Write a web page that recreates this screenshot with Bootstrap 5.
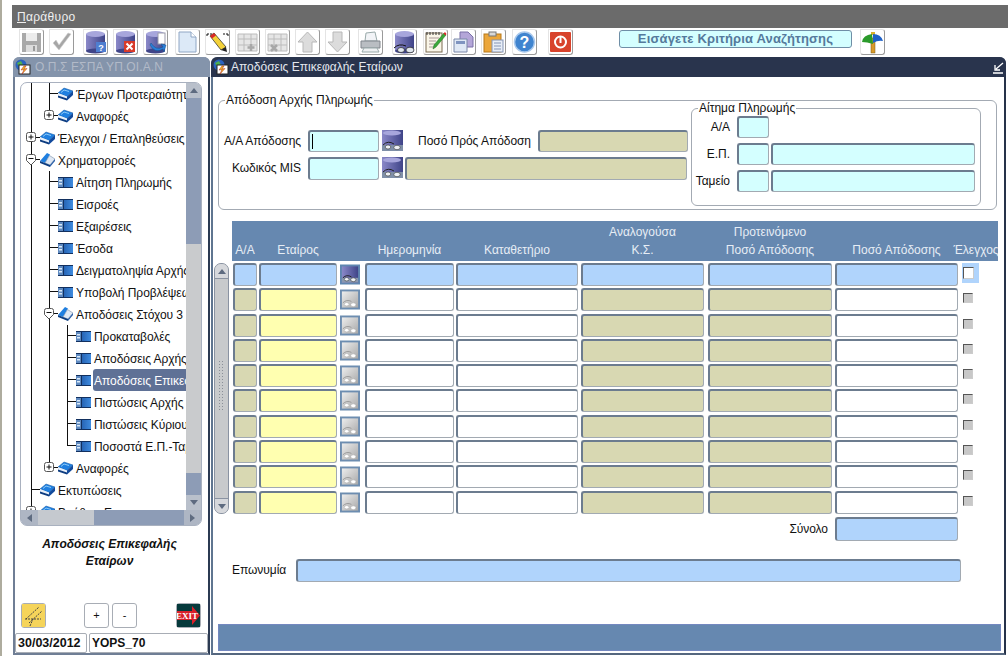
<!DOCTYPE html>
<html lang="el">
<head>
  <meta charset="UTF-8" />
  <meta name="viewport" content="width=device-width, initial-scale=1.0"/>
  <title>Αποδόσεις Επικεφαλής Εταίρων</title>
  <link rel="stylesheet" href="https://cdn.jsdelivr.net/npm/bootstrap@5.3.0/dist/css/bootstrap.min.css" />
  <style>
    html, body { height: 100%; }
    body {
      background: #fff;
      color: #111;
      font-family: "Liberation Sans", Arial, sans-serif;
      font-size: 12px;
      line-height: 1.2;
      overflow: hidden;
    }
    .app-root { width: 1008px; height: 656px; border-left: 2px solid #aeac9e; overflow: hidden; }
    .svg-defs { position: absolute; width: 0; height: 0; }

    /* menu + toolbar */
    .menu-bar { height: 23px; margin: 5px 0 0 10px; background: #6b6b6b; color: #f0f0f0; line-height: 24px; padding-left: 5px; letter-spacing: .3px; }
    .tool-bar { height: 29px; padding: 1px 0 0 17px; }
    .tb-btn { width: 25px; height: 26px; margin-right: 5px; border: 1px solid #e4e4e4; border-right-color: #9a9a9a; border-bottom-color: #9a9a9a; border-radius: 0 3px 3px 3px; flex: none; }
    .tb-btn svg { display: block; width: 23px; height: 24px; }
    .sp1 { margin-left: 1px; } .sp2 { margin-left: 2px; } .sp3 { margin-left: 3px; } .sp4 { margin-left: 4px; } .sp6 { margin-left: 6px; } .spn { margin-left: -2px; }
    .hint-box { width: 233px; height: 18px; margin: 1px 8px 0 41px; background: #d4ffff; border: 1px solid #6f8ea6; border-radius: 3px; color: #557a9c; font-weight: bold; font-size: 13px; letter-spacing: .16px; text-align: center; line-height: 16px; flex: none; }

    /* windows */
    .desk { height: 598px; padding-left: 11px; }
    .win-left { width: 197px; height: 598px; margin-right: 1px; border: solid #6f7e95; border-width: 0 2px 2px 2px; border-right-color: #2b3a52; border-radius: 7px 7px 0 0; }
    .win-right { width: 795px; height: 598px; border: solid #5f7590; border-width: 0 2px 2px 2px; border-right-color: #26324a; border-bottom-color: #55677f; border-radius: 7px 7px 0 0; }
    .win-title { height: 20px; margin: 0 -2px; padding: 0 2px; border-radius: 6px 6px 0 0; line-height: 21px; }
    .win-title svg { width: 16px; height: 16px; flex: none; }
    .tt-off { background: #8494ab; color: #b2bac8; letter-spacing: .1px; }
    .tt-on { background: #29344d; color: #e4e8ef; }
    .tt-text { margin-left: 2px; }

    /* navigator tree */
    .tree-box { width: 182px; height: 444px; margin: 5px 0 0 5px; border: 1px solid #a9b1bf; border-radius: 7px; overflow: hidden; position: relative; }
    .tree-top { height: 427px; }
    .tree-view { width: 165px; overflow: hidden; padding-left: 10px; white-space: nowrap; }
    .t-row { height: 22px; line-height: 24px; }
    .gd { width: 18px; height: 22px; flex: none; border-left: 1px solid #111; }
    .cn { width: 9px; height: 22px; flex: none; position: relative; }
    .cn::before { content: ""; position: absolute; left: 0; top: 0; width: 1px; height: 100%; background: #111; }
    .cn::after { content: ""; position: absolute; left: 0; top: 10px; width: 100%; height: 1px; background: #111; }
    .cn-l::before { height: 11px; }
    .cn-box { position: absolute; left: -5px; top: 5px; width: 11px; height: 12px; z-index: 1; }
    .t-ico { width: 15px; height: 15px; flex: none; align-self: center; }
    .t-txt { margin-left: 3px; letter-spacing: -.05px; }
    .t-sel { margin-left: 2px; padding-left: 1px; width: 100px; background: #5f7196; color: #fff; border-radius: 3px 0 0 3px; letter-spacing: -.05px; }
    .vs-bar { width: 15px; background: #8d9cb6; border-radius: 0 6px 0 0; flex: none; }
    .vs-btn { height: 15px; background: #b9c0cb; }
    .vs-thumb { height: 229px; margin-top: 146px; background: #c9cbcd; }
    .vs-low { height: 22px; }
    .hs-bar { height: 15px; background: #8d9cb6; }
    .hs-btn { width: 17px; background: #aeb6c4; flex: none; }
    .hs-thumb { width: 56px; background: #c5c9cf; }
    .arr { width: 0; height: 0; border: 4px solid transparent; }
    .arr-u { border-bottom: 5px solid #5e6b80; border-top-width: 0; }
    .arr-d { border-top: 5px solid #5e6b80; border-bottom-width: 0; }
    .arr-l { border-right: 5px solid #5e6b80; border-left-width: 0; }
    .arr-r { border-left: 5px solid #5e6b80; border-right-width: 0; }

    .nav-caption { height: 77px; padding: 10px 4px 0 0; font-weight: bold; font-style: italic; text-align: center; line-height: 17px; }
    .nav-btns { height: 25px; padding: 0 7px 0 6px; }
    .sq-btn { width: 25px; height: 25px; border: 1px solid #a8adb5; border-radius: 3px; flex: none; font-size: 11px; text-align: center; line-height: 23px; }
    .sq-btn svg { display: block; width: 23px; height: 23px; }
    .sq-plus { margin-left: 38px; }
    .sq-minus { margin-left: 3px; }
    .st-row { height: 20px; margin-top: 5px; gap: 2px; }
    .st-cell { height: 20px; border: 1px solid #a8adb5; border-radius: 2px; font-weight: bold; font-size: 12.5px; line-height: 19px; padding-left: 2px; }
    .st-date { width: 72px; }
    .st-user { width: 119px; font-size: 12px; }

    /* form */
    .grp-main { position: relative; width: 779px; height: 110px; margin: 23px 0 0 5px; border: 1px solid #a3aab3; border-radius: 6px; }
    .grp-left { margin-top: 29px; }
    .grp-sub { position: relative; width: 290px; height: 98px; margin: 7px 15px 0 0; border: 1px solid #a3aab3; border-radius: 6px; flex: none; padding-top: 7px; }
    .grp-ttl { position: absolute; left: 6px; top: -7px; background: #fff; padding: 0 1px; line-height: 13px; white-space: nowrap; }
    .f-row { margin-bottom: 5px; height: 23px; line-height: 23px; }
    .fr22 { height: 22px; line-height: 22px; }
    .lbl { text-align: right; flex: none; padding-right: 7px; white-space: nowrap; letter-spacing: -.05px; }
    .lb89 { width: 89px; }
    .lb135 { width: 135px; }
    .lb45 { width: 45px; }
    .fld { height: 100%; flex: none; border: 2px solid #6c7c8f; border-right-color: #a2aab2; border-bottom-color: #a2aab2; border-right-width: 1px; border-bottom-width: 1px; border-radius: 3px; }
    .w32 { width: 32px; }
    .w71 { width: 71px; }
    .w123 { width: 123px; }
    .w150 { width: 150px; }
    .w204 { width: 204px; margin-left: 2px; }
    .w282 { width: 282px; margin-left: 2px; }
    .w665 { width: 665px; }
    .bg-cy { background: #d4ffff; }
    .bg-kh { background: #d8d8b2; }
    .bg-ye { background: #ffffb0; }
    .bg-bl { background: #b0d4fc; }
    .bg-wh { background: #fff; }
    .caret-mk { display: block; width: 1px; height: 15px; margin: 2px 0 0 2px; background: #000; }
    .lov-btn { width: 21px; height: 21px; margin-left: 3px; flex: none; }
    .lov-btn svg { display: block; width: 21px; height: 21px; }

    /* multi-record block */
    .grid-wrap { margin: 11px 0 0 1px; }
    .grid-head { width: 766px; height: 40px; margin-left: 18px; background: #6688b0; color: #e6edf5; overflow: hidden; }
    .grid-head > div { flex: none; padding-bottom: 2px; line-height: 18px; text-align: center; align-self: flex-end; white-space: nowrap; }
    .grid-body { margin-top: 2px; }
    .grid-scroll { width: 15px; height: 251px; margin-right: 3px; border: 1px solid #8a93a2; border-radius: 7px; background: #c8cacc; flex: none; }
    .gs-end { height: 15px; background: #d6d8dc; border-radius: 6px 6px 0 0; border-bottom: 1px solid #8a93a2; }
    .gs-end.down { border-radius: 0 0 6px 6px; border-bottom: 0; border-top: 1px solid #8a93a2; }
    .gs-mid { width: 5px; height: 52px; margin: 81px 0 86px 3px; background-image: radial-gradient(#8a8f98 40%, transparent 45%); background-size: 3px 3px; }
    .rec-list { gap: 2.3px; }
    .rec { height: 23px; }
    .c1 { width: 24px; margin-left: 1px; }
    .c2 { width: 78px; margin-left: 2px; }
    .c3 { width: 20px; margin-left: 3px; }
    .c4 { width: 89px; margin-left: 5px; }
    .c5 { width: 122px; margin-left: 2px; }
    .c6 { width: 123px; margin-left: 3px; }
    .c7 { width: 124px; margin-left: 4px; }
    .c8 { width: 123px; margin-left: 3px; }
    .c9 { width: 17px; margin-left: 4px; flex: none; }
    .grid-head .c9 { margin-left: -5px; width: 46px; }
    .rec-ico { height: 21px; margin-top: 1px; display: block; flex: none; }
    .rec-ico svg { display: block; width: 20px; height: 21px; }
    .chk-cell { height: 20px; padding: 5px 0 0 1px; }
    .chk-box { display: block; width: 10px; height: 10px; border: 1px solid #555; border-right-color: #ccc; border-bottom-color: #ccc; }
    .chk-on { background: #b0d4fc; }
    .chk-on .chk-box { background: #fff; width: 11px; height: 12px; margin-top: -1px; }
    .chk-off .chk-box { background: #c8c8c8; }
    .sum-row { width: 745px; height: 24px; margin-top: 3px; line-height: 24px; }
    .name-row { height: 23px; margin: 18px 0 0 19px; line-height: 23px; }
    .name-lbl { width: 64px; letter-spacing: -.05px; }
    .foot-bar { width: 783px; height: 27px; margin: 42px 0 0 5px; background: #6688b0; border: 1px solid #7488c0; }
  </style>
</head>
<body>
  <svg class="svg-defs">
    <defs>
      <linearGradient id="dbg" x1="0" x2="1" y1="0" y2="0"><stop offset="0" stop-color="#8a88c8"/><stop offset="1" stop-color="#3f4488"/></linearGradient>
      <linearGradient id="dbk" x1="0" x2="1" y1="0" y2="1"><stop offset="0" stop-color="#ededed"/><stop offset="1" stop-color="#a8a8a8"/></linearGradient>
      <linearGradient id="frm" x1="0" x2="1" y1="0" y2="0"><stop offset="0" stop-color="#174a98"/><stop offset="1" stop-color="#3f8ce0"/></linearGradient>

      <symbol id="i-db" viewBox="0 0 23 24">
        <rect x="2" y="4" width="19" height="17" fill="url(#dbg)"/><ellipse cx="11.5" cy="21" rx="9.500" ry="2.500" fill="#3f4488"/><ellipse cx="11.5" cy="4" rx="9.500" ry="3" fill="#a7a6dc"/>
      </symbol>
      <symbol id="i-win" viewBox="0 0 16 16">
        <circle cx="6" cy="6" r="5.500" fill="#2a62c0"/><path d="M2 4 L6 2 L8 6 L4 8Z" fill="#4fb050"/>
        <rect x="4" y="6" width="11" height="9" fill="#fff" stroke="#222"/>
        <path d="M9 7 L6 11 L9 10.500 L7 15 L12 9.500 L9 10 L11 7Z" fill="#f2c21a" stroke="#b02020" stroke-width=".5"/>
      </symbol>
      <symbol id="i-book" viewBox="0 0 15 15">
        <path d="M0 6 L6 1 L15 4 L9 9.500Z" fill="#1f7fe0" stroke="#12569e" stroke-width=".5"/>
        <path d="M0 6 L9 9.500 L9 11.500 L0 8.500Z" fill="#e8f0fa"/><path d="M0 8.500 L9 11.500 L9 13.500 L0 10.500Z" fill="#0d3c80"/>
        <path d="M9 9.500 L15 4 L15 8 L9 13.500Z" fill="#124a9c"/><path d="M3 5.500 L6 3 L11 4.500" stroke="#8ccaf8" fill="none"/>
      </symbol>
      <symbol id="i-bookopen" viewBox="0 0 15 15">
        <path d="M0 8 L7 0 L10 1.500 L5 10Z" fill="#1f7fe0"/><path d="M5 10 L9.500 2.500 L15 6 L10 12Z" fill="#dfe8f4" stroke="#7a8ea8" stroke-width=".6"/><path d="M0 8 L10 12 L10 14 L0 10Z" fill="#0d3c80"/><path d="M10 12 L15 6 L15 8 L10 14Z" fill="#2a5fa8"/>
      </symbol>
      <symbol id="i-form" viewBox="0 0 15 15">
        <rect x="0" y="2" width="15" height="11" fill="url(#frm)"/><rect x="0" y="2" width="15" height="1" fill="#12305f"/><rect x="0" y="12" width="15" height="1" fill="#12305f"/>
        <rect x="0" y="3" width="5" height="9" fill="#5f8ac0"/><path d="M1 5h3v1.500H1zM1 8h3v1.500H1z" fill="#d8e8f8"/><rect x="5" y="3" width="1" height="9" fill="#12305f"/>
      </symbol>
      <symbol id="i-plus" viewBox="0 0 11 12">
        <rect x=".5" y=".5" width="9" height="9" rx="2" fill="#fff" stroke="#555"/><path d="M2.500 5h5M5 2.500v5" stroke="#111"/>
      </symbol>
      <symbol id="i-minus" viewBox="0 0 11 12">
        <path d="M.5 2.500 Q.5.5 2.500.5 H7.500 Q9.500.5 9.500 2.500 V6.500 L5 11 L.5 6.500Z" fill="#fff" stroke="#555"/><path d="M2.500 4.500h5" stroke="#111"/>
      </symbol>
      <symbol id="i-lov" viewBox="0 0 21 21">
        <rect width="21" height="21" fill="url(#dbg)"/><ellipse cx="10" cy="3" rx="9" ry="2.500" fill="#a7a6dc"/>
        <rect y="15" width="21" height="6" fill="#7f8fa8"/>
        <path d="M1 15 Q6 10 12 14" stroke="#222" fill="none"/><ellipse cx="6" cy="17" rx="2.800" ry="2" fill="#eef2f6" stroke="#333" stroke-width=".6"/><ellipse cx="15" cy="17.500" rx="3.200" ry="2.200" fill="#eef2f6" stroke="#333" stroke-width=".6"/>
      </symbol>
      <symbol id="i-lovon" viewBox="0 0 21 21">
        <rect width="21" height="21" fill="#5f86b0"/><rect x="2" y="2" width="17" height="17" fill="url(#dbg)"/><rect x="2" y="14" width="17" height="5" fill="#8a98b0"/>
        <path d="M3 14 Q7 10 12 13" stroke="#222" fill="none"/><ellipse cx="7" cy="15.500" rx="2.500" ry="1.800" fill="#eef2f6" stroke="#333" stroke-width=".6"/><ellipse cx="14" cy="16" rx="2.800" ry="2" fill="#eef2f6" stroke="#333" stroke-width=".6"/>
      </symbol>
      <symbol id="i-lovoff" viewBox="0 0 21 21">
        <rect width="21" height="21" fill="#6d8db0"/><rect x="2" y="2" width="17" height="17" fill="url(#dbk)"/>
        <path d="M3 14 Q7 10 12 12.500" stroke="#999" fill="none"/><ellipse cx="7" cy="15.500" rx="2.500" ry="1.800" fill="#fff" stroke="#aaa" stroke-width=".6"/><ellipse cx="14" cy="16" rx="2.800" ry="2" fill="#fff" stroke="#aaa" stroke-width=".6"/>
      </symbol>
    </defs>
  </svg>

  <div class="app-root">
    <div class="menu-bar"><u>Π</u>αράθυρο</div>

    <div class="tool-bar d-flex align-items-start">
      <div class="tb-btn"><svg viewBox="0 0 23 24"><path d="M2 3h19v19H2z" fill="#a9a9a9"/><rect x="6" y="3" width="11" height="8" fill="#ececec"/><rect x="6" y="15" width="11" height="7" fill="#dcdcdc"/><rect x="13" y="16" width="2" height="5" fill="#999"/></svg></div>
      <div class="tb-btn"><svg viewBox="0 0 23 24"><path d="M3 13 L9 20 L21 4 L18 3 L9 15 L6 10Z" fill="#a6a6a6" stroke="#cfcfcf" stroke-width=".6"/></svg></div>
      <div class="tb-btn sp4"><svg viewBox="0 0 23 24"><use href="#i-db"/><rect x="12" y="12" width="10" height="10" fill="#4f7ed0"/><text x="17" y="20.500" text-anchor="middle" font-size="9" font-weight="bold" fill="#fff">?</text></svg></div>
      <div class="tb-btn"><svg viewBox="0 0 23 24"><use href="#i-db"/><rect x="10" y="11" width="11" height="11" fill="#d83a2a"/><path d="M12.500 13.500l6 6M18.500 13.500l-6 6" stroke="#fff" stroke-width="2"/></svg></div>
      <div class="tb-btn"><svg viewBox="0 0 23 24"><use href="#i-db"/><rect x="14" y="3" width="7" height="11" fill="#fff" stroke="#99a"/><path d="M7 13 Q12 21 19 17 L17 14 L22 15 L20 22 L19 19 Q11 24 6 15Z" fill="#2a7fd8" stroke="#14508c" stroke-width=".5"/></svg></div>
      <div class="tb-btn sp2"><svg viewBox="0 0 23 24"><path d="M3 2h12l5 5v15H3z" fill="#dce9f7" stroke="#8fa6c4"/><path d="M15 2v5h5" fill="#fff" stroke="#8fa6c4"/></svg></div>
      <div class="tb-btn"><svg viewBox="0 0 23 24"><path d="M1 4h6M1 4v3M22 4h-6M22 4v3" stroke="#111" stroke-dasharray="2 1"/><path d="M4 6 L8 3 L20 17 L15 20Z" fill="#f4d23a" stroke="#222" stroke-width=".7"/><path d="M4 6 L8 3 L10 5.500 L6 8.500Z" fill="#d8282a"/><path d="M15 20 L20 17 L21 22Z" fill="#222"/></svg></div>
      <div class="tb-btn"><svg viewBox="0 0 23 24"><path d="M2 4h19v17H2zM2 9h19M2 15h19M8 4v17M15 4v17" fill="#e6e6e6" stroke="#bcbcbc"/><path d="M15 14v7M11.500 17.500h7" stroke="#a8a8a8" stroke-width="2.500"/></svg></div>
      <div class="tb-btn"><svg viewBox="0 0 23 24"><path d="M2 4h19v17H2zM2 9h19M2 15h19M8 4v17M15 4v17" fill="#e6e6e6" stroke="#bcbcbc"/><path d="M5 15l6 6M11 15l-6 6" stroke="#a8a8a8" stroke-width="2.500"/></svg></div>
      <div class="tb-btn"><svg viewBox="0 0 23 24"><path d="M11.500 2 L21 12 H16 V22 H7 V12 H2Z" fill="#dcdcdc" stroke="#b8b8b8"/></svg></div>
      <div class="tb-btn"><svg viewBox="0 0 23 24"><path d="M11.500 22 L21 12 H16 V2 H7 V12 H2Z" fill="#dcdcdc" stroke="#b8b8b8"/></svg></div>
      <div class="tb-btn sp3"><svg viewBox="0 0 23 24"><path d="M7 3 L16 2 L18 11 H6Z" fill="#f2f4f7" stroke="#9aa"/><path d="M2 11h19v7H2z" fill="#b9bdc2" stroke="#80858c"/><path d="M5 18 L18 18 L20 22 H3Z" fill="#eef0f2" stroke="#9aa"/></svg></div>
      <div class="tb-btn sp4"><svg viewBox="0 0 23 24"><use href="#i-db"/><path d="M1 18 Q6 13 13 16" stroke="#111" fill="none"/><ellipse cx="8" cy="20" rx="3.500" ry="2.500" fill="#dfe6ee" stroke="#222" stroke-width=".7"/><ellipse cx="17" cy="20" rx="4" ry="2.800" fill="#dfe6ee" stroke="#222" stroke-width=".7"/></svg></div>
      <div class="tb-btn sp1"><svg viewBox="0 0 23 24"><rect x="2" y="3" width="16" height="19" fill="#faf6e8" stroke="#7a6a50"/><path d="M3 2v3M6 2v3M9 2v3M12 2v3M15 2v3" stroke="#333"/><path d="M5 8h10M5 11h7M5 14h6M5 17h6" stroke="#a99"/><path d="M9 19 L10 15 L20 3 L22 5 L12 17Z" fill="#3aa83a" stroke="#1f6e1f" stroke-width=".5"/><path d="M19.500 3.500 L21 2 L22.500 4 L21.500 5.500Z" fill="#d8282a"/></svg></div>
      <div class="tb-btn spn"><svg viewBox="0 0 23 24"><path d="M8 2h8l5 5v10H8z" fill="#b4a6d8" stroke="#7a70a8"/><path d="M2 9h13v13H2z" fill="#dfe8f5" stroke="#7a88a8"/><rect x="4" y="11" width="9" height="3" fill="#7f94c0"/></svg></div>
      <div class="tb-btn"><svg viewBox="0 0 23 24"><rect x="2" y="4" width="17" height="18" fill="#eba63a" stroke="#b87818"/><rect x="7" y="2" width="7" height="4" fill="#d8d8d8" stroke="#777"/><rect x="10" y="10" width="11" height="12" fill="#e8eef7" stroke="#8494b4"/><path d="M12 13h7M12 16h7M12 19h7" stroke="#8494b4"/></svg></div>
      <div class="tb-btn sp1"><svg viewBox="0 0 23 24"><circle cx="11.500" cy="12" r="10" fill="#3f84cf" stroke="#a8c8ec" stroke-width="1.500"/><text x="11.500" y="17.500" text-anchor="middle" font-size="16" font-weight="bold" fill="#fff">?</text></svg></div>
      <div class="tb-btn sp6"><svg viewBox="0 0 23 24"><rect x="1" y="2" width="21" height="20" rx="1" fill="#d8432c"/><circle cx="11.500" cy="12" r="5.500" fill="none" stroke="#fff" stroke-width="2"/><rect x="10.500" y="7" width="2" height="6" fill="#fff"/></svg></div>
      <div class="hint-box">Εισάγετε Κριτήρια Αναζήτησης</div>
      <div class="tb-btn"><svg viewBox="0 0 23 24"><rect x="10" y="8" width="4" height="15" fill="#d99a2a" stroke="#7a5a14" stroke-width=".5"/><rect x="10" y="2" width="4" height="3" fill="#d9b02a"/><path d="M1 12 Q2 5 11 4 L12 14 Q6 12 1 12Z" fill="#2b9a2b"/><path d="M12 4 Q20 4 22 11 Q17 10 12 13Z" fill="#1f62c8"/></svg></div>
    </div>

    <div class="desk d-flex">
      <!-- navigator window -->
      <div class="win-left">
        <div class="win-title tt-off d-flex align-items-center gap-1"><svg><use href="#i-win"/></svg>Ο.Π.Σ ΕΣΠΑ ΥΠ.ΟΙ.Α.Ν</div>
        <div class="tree-box">
          <div class="tree-top d-flex">
            <div class="tree-view" id="tree"></div>
            <div class="vs-bar">
              <div class="vs-btn d-flex align-items-center justify-content-center"><span class="arr arr-u"></span></div>
              <div class="vs-thumb"></div>
              <div class="vs-low"></div>
              <div class="vs-btn d-flex align-items-center justify-content-center"><span class="arr arr-d"></span></div>
            </div>
          </div>
          <div class="hs-bar d-flex">
            <div class="hs-btn d-flex align-items-center justify-content-center"><span class="arr arr-l"></span></div>
            <div class="hs-thumb"></div>
            <div class="hs-btn ms-auto d-flex align-items-center justify-content-center"><span class="arr arr-r"></span></div>
          </div>
        </div>
        <div class="nav-caption">Αποδόσεις Επικεφαλής<br>Εταίρων</div>
        <div class="nav-btns d-flex">
          <div class="sq-btn"><svg viewBox="0 0 23 23"><rect width="23" height="23" fill="#f5d45a"/><path d="M4 15 L17 3M7 19 L20 7M3 15h16M8 22l3-7" stroke="#444" stroke-dasharray="2 1" fill="none"/></svg></div>
          <div class="sq-btn sq-plus">+</div>
          <div class="sq-btn sq-minus">-</div>
          <div class="sq-btn ms-auto"><svg viewBox="0 0 23 23"><rect width="23" height="23" fill="#063a3c"/><path d="M0 7h15V2l8 9.500-8 9.500v-5H0z" fill="#d8202a"/><text x="10" y="14.500" text-anchor="middle" font-size="9" font-weight="bold" font-family="Liberation Serif, serif" fill="#fff">EXIT</text></svg></div>
        </div>
        <div class="st-row d-flex">
          <div class="st-cell st-date">30/03/2012</div>
          <div class="st-cell st-user">YOPS_70</div>
        </div>
      </div>

      <!-- form window -->
      <div class="win-right">
        <div class="win-title tt-on d-flex align-items-center"><svg><use href="#i-win"/></svg><span class="tt-text">Αποδόσεις Επικεφαλής Εταίρων</span>
          <svg class="ms-auto" viewBox="0 0 16 16"><path d="M15 4 L8 10M7 6v5h5M5 14h10" stroke="#fff" stroke-width="1.300" fill="none"/></svg>
        </div>

        <div class="grp-main d-flex justify-content-between">
          <div class="grp-ttl">Απόδοση Αρχής Πληρωμής</div>
          <div class="grp-left">
            <div class="f-row fr22 d-flex">
              <div class="lbl lb89">Α/Α Απόδοσης</div>
              <div class="fld bg-cy w71"><span class="caret-mk"></span></div>
              <div class="lov-btn"><svg><use href="#i-lov"/></svg></div>
              <div class="lbl lb135">Ποσό Πρός Απόδοση</div>
              <div class="fld bg-kh w150"></div>
            </div>
            <div class="f-row d-flex">
              <div class="lbl lb89">Κωδικός MIS</div>
              <div class="fld bg-cy w71"></div>
              <div class="lov-btn"><svg><use href="#i-lov"/></svg></div>
              <div class="fld bg-kh w282"></div>
            </div>
          </div>
          <div class="grp-sub">
            <div class="grp-ttl">Αίτημα Πληρωμής</div>
            <div class="f-row fr22 d-flex">
              <div class="lbl lb45">Α/Α</div>
              <div class="fld bg-cy w32"></div>
            </div>
            <div class="f-row fr22 d-flex">
              <div class="lbl lb45">Ε.Π.</div>
              <div class="fld bg-cy w32"></div>
              <div class="fld bg-cy w204"></div>
            </div>
            <div class="f-row fr22 d-flex">
              <div class="lbl lb45">Ταμείο</div>
              <div class="fld bg-cy w32"></div>
              <div class="fld bg-cy w204"></div>
            </div>
          </div>
        </div>

        <div class="grid-wrap">
          <div class="grid-head d-flex">
            <div class="c1">Α/Α</div>
            <div class="c2">Εταίρος</div>
            <div class="c3"></div>
            <div class="c4">Ημερομηνία</div>
            <div class="c5">Καταθετήριο</div>
            <div class="c6">Αναλογούσα<br>Κ.Σ.</div>
            <div class="c7">Προτεινόμενο<br>Ποσό Απόδοσης</div>
            <div class="c8">Ποσό Απόδοσης</div>
            <div class="c9">Έλεγχος</div>
          </div>
          <div class="grid-body d-flex">
            <div class="grid-scroll">
              <div class="gs-end d-flex align-items-center justify-content-center"><span class="arr arr-u"></span></div>
              <div class="gs-mid"></div>
              <div class="gs-end down d-flex align-items-center justify-content-center"><span class="arr arr-d"></span></div>
            </div>
            <div class="rec-list d-flex flex-column" id="records"></div>
          </div>
        </div>

        <div class="sum-row d-flex justify-content-end">
          <div class="lbl">Σύνολο</div>
          <div class="fld bg-bl w123"></div>
        </div>

        <div class="name-row d-flex">
          <div class="name-lbl">Επωνυμία</div>
          <div class="fld bg-bl w665"></div>
        </div>

        <div class="foot-bar"></div>
      </div>
    </div>
  </div>

  <script>
    // navigator rows: indent level, connector, icon, text
    const treeRows = [
      [1, "t", "book", "Έργων Προτεραιότητας"],
      [1, "lp", "book", "Αναφορές"],
      [0, "tp", "book", "Έλεγχοι / Επαληθεύσεις"],
      [0, "tm", "bookopen", "Χρηματορροές"],
      [1, "t", "form", "Αίτηση Πληρωμής"],
      [1, "t", "form", "Εισροές"],
      [1, "t", "form", "Εξαιρέσεις"],
      [1, "t", "form", "Έσοδα"],
      [1, "t", "form", "Δειγματοληψία Αρχής"],
      [1, "t", "form", "Υποβολή Προβλέψεων"],
      [1, "tm", "bookopen", "Αποδόσεις Στόχου 3"],
      [2, "t", "form", "Προκαταβολές"],
      [2, "t", "form", "Αποδόσεις Αρχής"],
      [2, "t", "form", "Αποδόσεις Επικεφαλής", true],
      [2, "t", "form", "Πιστώσεις Αρχής"],
      [2, "t", "form", "Πιστώσεις Κύριου"],
      [2, "l", "form", "Ποσοστά Ε.Π.-Ταμείου"],
      [1, "lp", "book", "Αναφορές"],
      [0, "t", "book", "Εκτυπώσεις"],
      [0, "tp", "book", "Βοήθεια Εφ."]
    ];
    let treeHtml = "";
    treeRows.forEach(function (r) {
      let guides = "";
      for (let i = 0; i < r[0]; i++) guides += '<i class="gd"></i>';
      const kind = r[1];
      let box = "";
      if (kind.endsWith("p")) box = '<svg class="cn-box"><use href="#i-plus"/></svg>';
      if (kind.endsWith("m")) box = '<svg class="cn-box"><use href="#i-minus"/></svg>';
      const last = kind[0] === "l" ? " cn-l" : "";
      const txt = r[4] ? '<span class="t-sel">' + r[3] + "</span>" : '<span class="t-txt">' + r[3] + "</span>";
      treeHtml += '<div class="t-row d-flex">' + guides +
        '<span class="cn' + last + '">' + box + "</span>" +
        '<svg class="t-ico"><use href="#i-' + r[2] + '"/></svg>' + txt + "</div>";
    });
    document.getElementById("tree").innerHTML = treeHtml;

    // ten records, the first one is the current row
    let recHtml = "";
    for (let n = 0; n < 10; n++) {
      const on = n === 0;
      const ro = on ? "bg-bl" : "bg-kh";
      const rw = on ? "bg-bl" : "bg-wh";
      recHtml += '<div class="rec d-flex">' +
        '<div class="fld c1 ' + ro + '"></div>' +
        '<div class="fld c2 ' + (on ? "bg-bl" : "bg-ye") + '"></div>' +
        '<div class="c3 rec-ico"><svg><use href="#i-' + (on ? "lovon" : "lovoff") + '"/></svg></div>' +
        '<div class="fld c4 ' + rw + '"></div>' +
        '<div class="fld c5 ' + rw + '"></div>' +
        '<div class="fld c6 ' + ro + '"></div>' +
        '<div class="fld c7 ' + ro + '"></div>' +
        '<div class="fld c8 ' + rw + '"></div>' +
        '<div class="c9 chk-cell ' + (on ? "chk-on" : "chk-off") + '"><span class="chk-box"></span></div>' +
        "</div>";
    }
    document.getElementById("records").innerHTML = recHtml;
  </script>
  <script src="https://cdn.jsdelivr.net/npm/bootstrap@5.3.0/dist/js/bootstrap.bundle.min.js"></script>
</body>
</html>
